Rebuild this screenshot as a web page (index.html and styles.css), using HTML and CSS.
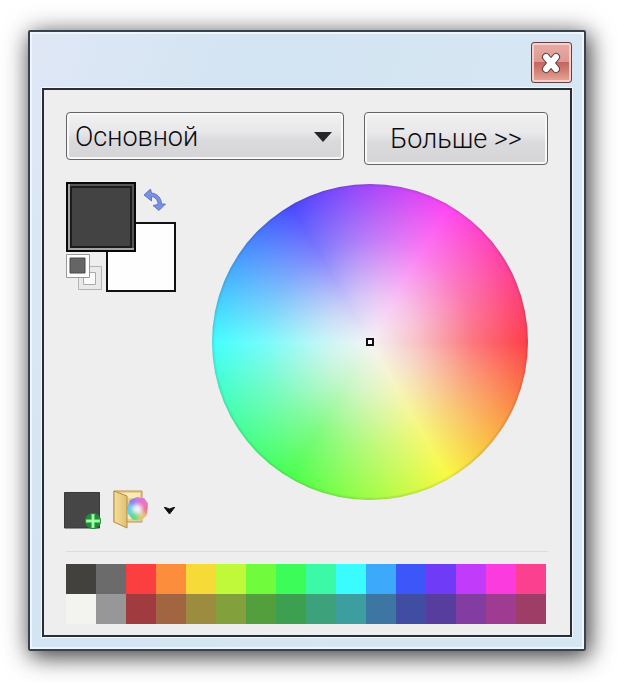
FILE: index.html
```html
<!DOCTYPE html>
<html lang="ru">
<head>
<meta charset="utf-8">
<title>Палитра</title>
<link rel="stylesheet" href="styles.css">
</head>
<body>
<main class="window">
  <header class="titlebar">
    <button class="close" type="button" aria-label="Закрыть">
      <svg width="26" height="24" viewBox="0 0 26 24" aria-hidden="true">
        <path d="M7 6 17 18M17 6 7 18" stroke="#5b3b3d" stroke-width="8" stroke-linecap="round"/>
        <path d="M7 6 17 18M17 6 7 18" stroke="#fff" stroke-width="6" stroke-linecap="round"/>
      </svg>
    </button>
  </header>
  <div class="panel">
    <div class="controls">
      <div class="mode">
        <select class="mode-select" aria-label="Цвет"><option>Основной</option></select>
        <svg class="mode-arrow" width="18" height="10" viewBox="0 0 18 10" aria-hidden="true"><path d="M0 0H18L9 10Z" fill="#28252a"/></svg>
      </div>
      <button class="more" type="button">Больше &gt;&gt;</button>
    </div>
    <div class="picker">
      <div class="side">
        <div class="swatches">
          <button class="secondary" type="button" aria-label="Дополнительный цвет"></button>
          <button class="primary" type="button" aria-label="Основной цвет"></button>
          <button class="swap plain" type="button" aria-label="Поменять цвета">
            <svg width="22" height="22" viewBox="0 0 22 22" aria-hidden="true">
              <path d="M0 6 6.500 0 7.500 4C13 4.500 17.500 9 17.500 15H21.500L15 21.500 9 16.500 14 15.500C14 11 11 8 7.500 7.500L7.500 12Z" fill="#7791e4" stroke="#5266b8" stroke-width=".8" stroke-linejoin="round"/>
            </svg>
          </button>
          <button class="reset plain" type="button" aria-label="Сбросить цвета">
            <svg width="36" height="37" viewBox="0 0 36 37" aria-hidden="true">
              <path d="M12.500 12.500H35.500V35.500H12.500Z" fill="#e9e9e9" stroke="#b4b4b4"/>
              <path d="M17.500 18.500H29.500V30.500H17.500Z" fill="#fafafa" stroke="#aaa"/>
              <path d="M.5.500H23.500V23.500H.5Z" fill="#fdfdfd" stroke="#999"/>
              <path d="M4 4H19V19H4Z" fill="#656565" stroke="#4b4b4b"/>
            </svg>
          </button>
        </div>
        <div class="tools">
          <button class="plain" type="button" aria-label="Добавить цвет">
            <svg width="38" height="39" viewBox="0 0 38 39" aria-hidden="true">
              <path d="M.5 1.500H35.500V37H.5Z" fill="#464646" stroke="#393939"/>
              <circle cx="29" cy="30" r="8" fill="#24883a"/>
              <path d="M29 22.500V37.500M21.500 30H36.500" stroke="#1f9336" stroke-width="5"/>
              <path d="M29 23V37M22 30H36" stroke="#86f38b" stroke-width="3"/>
              <path d="M29 24V36M23 30H35" stroke="#c5ffc4"/>
            </svg>
          </button>
          <button class="plain" type="button" aria-label="Палитры">
            <svg width="36" height="40" viewBox="0 0 36 40" aria-hidden="true">
              <defs>
                <linearGradient id="folder"><stop stop-color="#f5df9a"/><stop offset="1" stop-color="#dfbf73"/></linearGradient>
                <clipPath id="ball"><path d="M17 10 24 7 31 8 35 13 34 25 28 31 20 30 15 24 14 17Z"/></clipPath>
                <filter id="soft" x="-50%" y="-50%" width="200%" height="200%"><feGaussianBlur stdDeviation="2"/></filter>
              </defs>
              <path d="M1 1H29V32H1Z" fill="#ead08b" stroke="#b8954f"/>
              <path d="M4 3H27V8H13V29H27" fill="#f8eab9"/>
              <g clip-path="url(#ball)"><path d="M12 5H36V33H12Z" fill="#e9e4f4"/><g filter="url(#soft)">
                <circle cx="19" cy="10" r="6" fill="#7f85e6"/><circle cx="29" cy="10" r="6" fill="#e46fd2"/>
                <circle cx="35" cy="19" r="6" fill="#ea7088"/><circle cx="30" cy="29" r="6" fill="#e8c870"/>
                <circle cx="20" cy="28" r="6" fill="#5fdc84"/><circle cx="14" cy="20" r="6" fill="#62cfe2"/>
                <circle cx="24" cy="19" r="3" fill="#fff"/>
              </g></g>
              <path d="M1 1 14 6V38L1 32Z" fill="url(#folder)" stroke="#b48c43" stroke-linejoin="round"/>
            </svg>
          </button>
          <button class="plain" type="button" aria-label="Меню палитр">
            <svg width="11" height="7" viewBox="0 0 11 7" aria-hidden="true"><path d="M0 0 5.500 2 11 0 5.500 7Z" fill="#111" stroke="#111"/></svg>
          </button>
        </div>
      </div>
      <div class="wheel" role="img" aria-label="Цветовой круг"><span class="marker"></span></div>
    </div>
    <hr class="divider">
    <div class="palette" role="img" aria-label="Палитра цветов">
      <i class="c1"></i><i class="c2"></i><i class="c3"></i><i class="c4"></i><i class="c5"></i><i class="c6"></i><i class="c7"></i><i class="c8"></i><i class="c9"></i><i class="c10"></i><i class="c11"></i><i class="c12"></i><i class="c13"></i><i class="c14"></i><i class="c15"></i><i class="c16"></i>
      <i class="d1"></i><i class="d2"></i><i class="d3"></i><i class="d4"></i><i class="d5"></i><i class="d6"></i><i class="d7"></i><i class="d8"></i><i class="d9"></i><i class="d10"></i><i class="d11"></i><i class="d12"></i><i class="d13"></i><i class="d14"></i><i class="d15"></i><i class="d16"></i>
    </div>
  </div>
</main>
</body>
</html>
```
FILE: styles.css
```css
* { box-sizing: border-box; }
body {
  margin: 0;
  padding: 30px 32px 32px 28px;
  background: #fff;
  font-family: Roboto, "Liberation Sans", sans-serif;
  color: #0c0a0d;
}
button, select { margin: 0; font: inherit; color: inherit; }
svg { display: block; fill: none; }
.plain { padding: 0; border: 0; background: none; }

.window {
  padding: 10px 12px 12px;
  border: 2px solid #38424d;
  border-radius: 2px;
  background: linear-gradient(110deg, #dfe7f5, #d3e4f2 30%, #d6e6f3 65%, #d5e7f2);
  box-shadow: inset 0 0 0 2px #eef5fc, 3px 5px 20px rgba(0, 0, 0, .55), 2px 4px 30px rgba(0, 0, 0, .4);
}
.titlebar { display: flex; justify-content: flex-end; height: 46px; }
.close {
  display: grid;
  place-items: center;
  width: 41px;
  height: 41px;
  padding: 0;
  border: 1px solid #683f43;
  border-radius: 3px;
  background: linear-gradient(#e8aca5, #dc9a91 49%, #c3665f 50%, #d58477 75%, #e8aaa0);
  box-shadow: inset 0 0 0 2px #f5cfc9;
}
.panel {
  padding: 22px 22px 11px;
  border: 2px solid #292d34;
  background: #eeeeef;
  box-shadow: 0 0 0 1px #f4f8fc;
}

.controls { display: flex; align-items: flex-start; gap: 20px; }
.mode { position: relative; flex: 1; }
.mode-select, .more {
  border: 1px solid #656467;
  border-radius: 4px;
  background: linear-gradient(#f1f1f2, #e8e8ea 40%, #dadadd 60%, #d5d5d7);
  box-shadow: inset 0 0 0 2px #f8f8f8;
  font-size: 27px;
  line-height: 32px;
  font-weight: 300;
}
.mode-select {
  appearance: none;
  display: block;
  width: 100%;
  height: 48px;
  padding: 2px 40px 0 8px;
}
.mode-arrow { position: absolute; right: 12px; top: 20px; pointer-events: none; }
.more { width: 184px; height: 53px; padding: 0; }

.picker { display: flex; gap: 36px; margin-top: 17px; }
.side { display: flex; flex-direction: column; justify-content: space-between; width: 110px; }
.swatches { position: relative; height: 110px; }
.primary, .secondary { position: absolute; width: 70px; height: 70px; padding: 0; }
.primary {
  left: 0;
  top: 0;
  border: 2px solid #080808;
  background: #434344;
  box-shadow: inset 2px -2px 0 #a4a4a4, inset -2px 2px 0 #555, inset 0 0 0 4px #1c1c1c;
}
.secondary { right: 0; bottom: 0; border: 2px solid #111; background: #fefefe; }
.swap { position: absolute; left: 78px; top: 7px; }
.reset { position: absolute; left: 0; top: 72px; }
.tools { display: flex; align-items: center; gap: 11px; margin-left: -2px; }
.tools button:last-child { margin-left: 4px; }

.wheel {
  display: grid;
  place-items: center;
  flex: 1;
  align-self: flex-start;
  aspect-ratio: 1;
  margin: 2px 20px 30px 0;
  border-radius: 50%;
  background:
    radial-gradient(circle closest-side, #f5f3f5 0%, rgba(245, 243, 245, .74) 30%, rgba(245, 243, 245, .34) 65%, rgba(245, 243, 245, .06) 98%, rgba(80, 80, 80, .2) 100%),
    conic-gradient(from 90deg, #ff3540, #f8fa38 60deg, #42ff42 120deg, #3affff 180deg, #4040ff 240deg, #ff3df2 300deg, #ff3540);
}
.marker { width: 8px; height: 8px; border: 2px solid #111; background: #fff; }

.divider { height: 1px; margin: 21px 0 12px; border: 0; background: #dcdcdd; }
.palette {
  display: grid;
  grid-template-columns: repeat(16, 1fr);
  grid-auto-rows: 30px;
  padding-right: 2px;
}
.c1 { background: #42413e; } .d1 { background: #f3f3f0; }
.c2 { background: #6b6b6c; } .d2 { background: #989798; }
.c3 { background: #fb3e40; } .d3 { background: #a03c40; }
.c4 { background: #fb8d3d; } .d4 { background: #a26542; }
.c5 { background: #f6da38; } .d5 { background: #9c8c40; }
.c6 { background: #c0f83a; } .d6 { background: #82a03c; }
.c7 { background: #70fb3c; } .d7 { background: #539f3d; }
.c8 { background: #3bfc58; } .d8 { background: #3da051; }
.c9 { background: #3cf9a8; } .d9 { background: #3da17c; }
.c10 { background: #3afcff; } .d10 { background: #3c9e9e; }
.c11 { background: #3da9fb; } .d11 { background: #3d76a2; }
.c12 { background: #3c56fa; } .d12 { background: #414da2; }
.c13 { background: #703bf7; } .d13 { background: #573e9e; }
.c14 { background: #c13bfb; } .d14 { background: #823ca2; }
.c15 { background: #fb3bde; } .d15 { background: #9f3b91; }
.c16 { background: #fb4090; } .d16 { background: #9e3d65; }
```
